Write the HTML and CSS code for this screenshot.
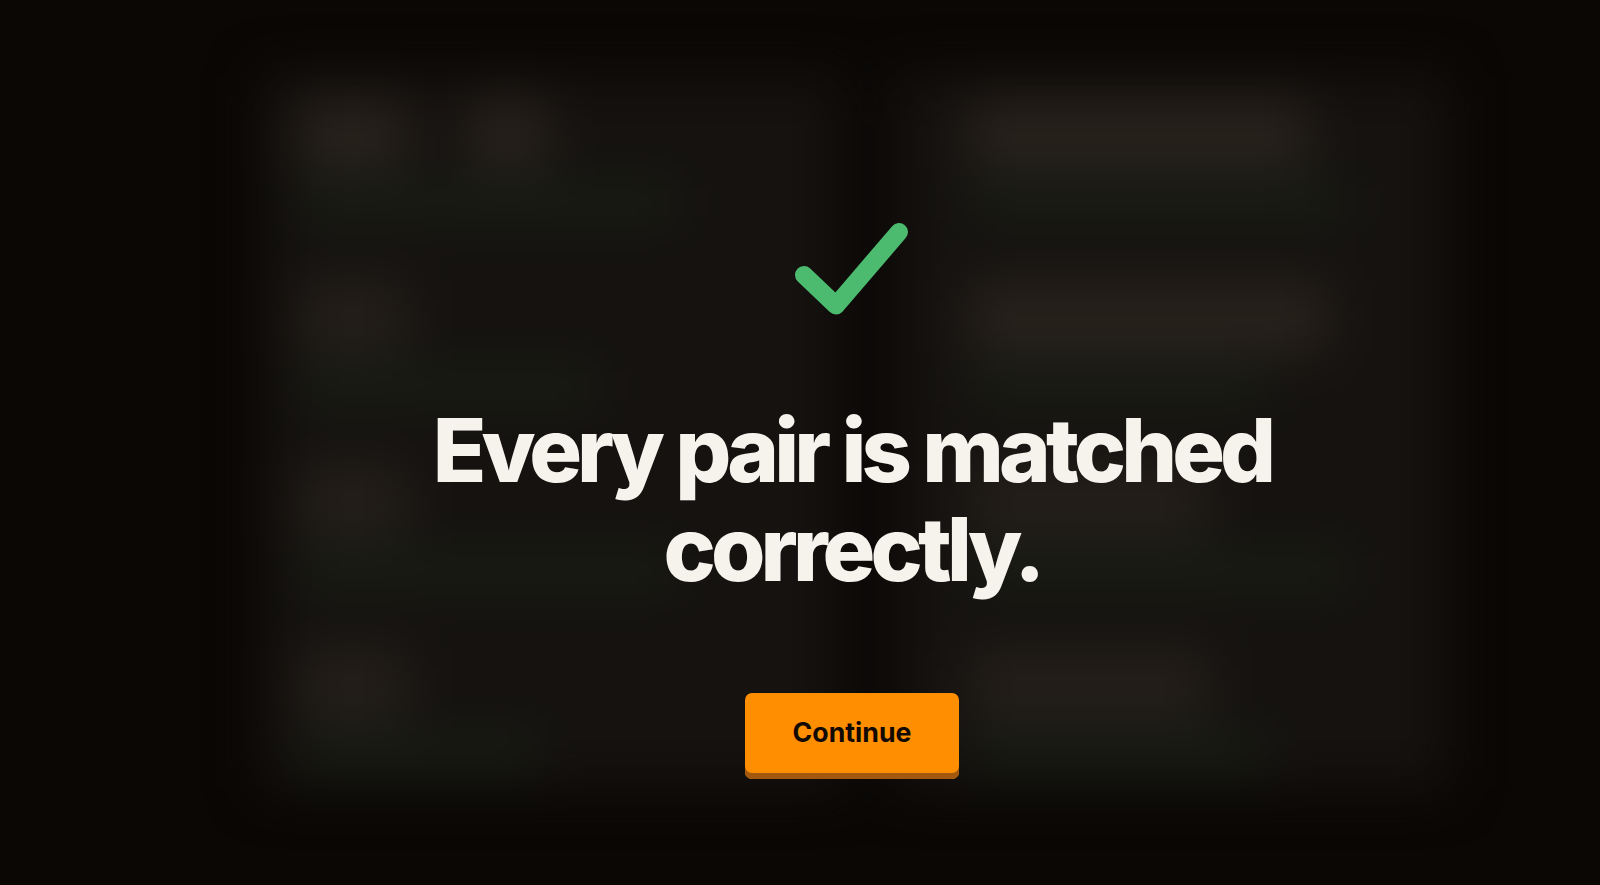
FILE: index.html
```html
<!DOCTYPE html>
<html lang="en">
<head>
<meta charset="utf-8">
<title>Every pair is matched correctly</title>
<link rel="stylesheet" href="styles.css">
</head>
<body>
<div class="backdrop" aria-hidden="true">
  <div class="column column-left">
    <div class="card"><div class="line"><i class="blob w110"></i><i class="blob w80"></i></div><i class="tint w380"></i></div>
    <div class="card"><div class="line"><i class="blob w110 dim"></i></div><i class="tint w300"></i></div>
    <div class="card"><div class="line"><i class="blob w110 dim"></i></div><i class="tint w380"></i></div>
    <div class="card"><div class="line"><i class="blob w110 dim"></i></div><i class="tint w240"></i></div>
  </div>
  <div class="column column-right">
    <div class="card"><div class="line"><i class="blob w340"></i></div><i class="tint w380"></i></div>
    <div class="card"><div class="line"><i class="blob w360"></i></div><i class="tint w300"></i></div>
    <div class="card"><div class="line"><i class="blob w240 dim"></i></div><i class="tint w380"></i></div>
    <div class="card"><div class="line"><i class="blob w240 dim"></i></div><i class="tint w300"></i></div>
  </div>
</div>
<main class="result">
  <svg class="check" viewBox="0 0 120 100" width="120" height="100" aria-hidden="true">
    <path d="M12 60 L44 90.5 L107 17"/>
  </svg>
  <h1 class="title">Every pair is matched correctly.</h1>
  <button class="continue" type="button">Continue</button>
</main>
</body>
</html>
```
FILE: styles.css
```css
* { box-sizing: border-box; }
html, body { margin: 0; height: 100%; }
body {
  background: #0a0705;
  overflow: hidden;
  font-family: Inter, "Liberation Sans", sans-serif;
  position: relative;
}
.backdrop {
  position: absolute;
  left: 270px;
  top: 84px;
  width: 1170px;
  height: 696px;
  display: flex;
  justify-content: space-between;
  filter: blur(26px);
}
.column {
  width: 563px;
  display: flex;
  flex-direction: column;
  justify-content: space-between;
  background: #151210;
  padding: 14px 28px 0;
  box-shadow: 0 0 0 8px #151210;
}
.column-right { width: 538px; padding: 14px 67px 0; }
.card { height: 130px; display: flex; flex-direction: column; gap: 14px; }
.line { display: flex; gap: 60px; }
.blob { display: block; height: 70px; background: #28221c; }
.blob.dim { background: #241f1a; }
.tint { display: block; height: 40px; background: #191d14; }
.w80 { width: 80px; }
.w110 { width: 110px; }
.w240 { width: 240px; }
.w300 { width: 300px; }
.w340 { width: 340px; }
.w360 { width: 360px; }
.w380 { width: 380px; }
.result {
  position: relative;
  padding: 215px 0 0 104px;
  display: flex;
  flex-direction: column;
  align-items: center;
}
.check { display: block; }
.check path {
  fill: none;
  stroke: #4cbb6f;
  stroke-width: 18;
  stroke-linecap: round;
  stroke-linejoin: round;
}
.title {
  width: 1000px;
  margin: 85.5px 0 0;
  color: #f6f3ed;
  font-size: 88px;
  line-height: 99px;
  font-weight: 850;
  letter-spacing: -0.056em;
  word-spacing: 1px;
  text-align: center;
}
.continue {
  width: 214px;
  height: 86px;
  margin-top: 94.5px;
  padding: 0 0 8px;
  border: 0;
  border-radius: 7px;
  background: #ff8e00;
  box-shadow: inset 0 -6px 0 #a2590f;
  color: #120a02;
  font-family: inherit;
  font-size: 26.7px;
  font-weight: 700;
}
```
